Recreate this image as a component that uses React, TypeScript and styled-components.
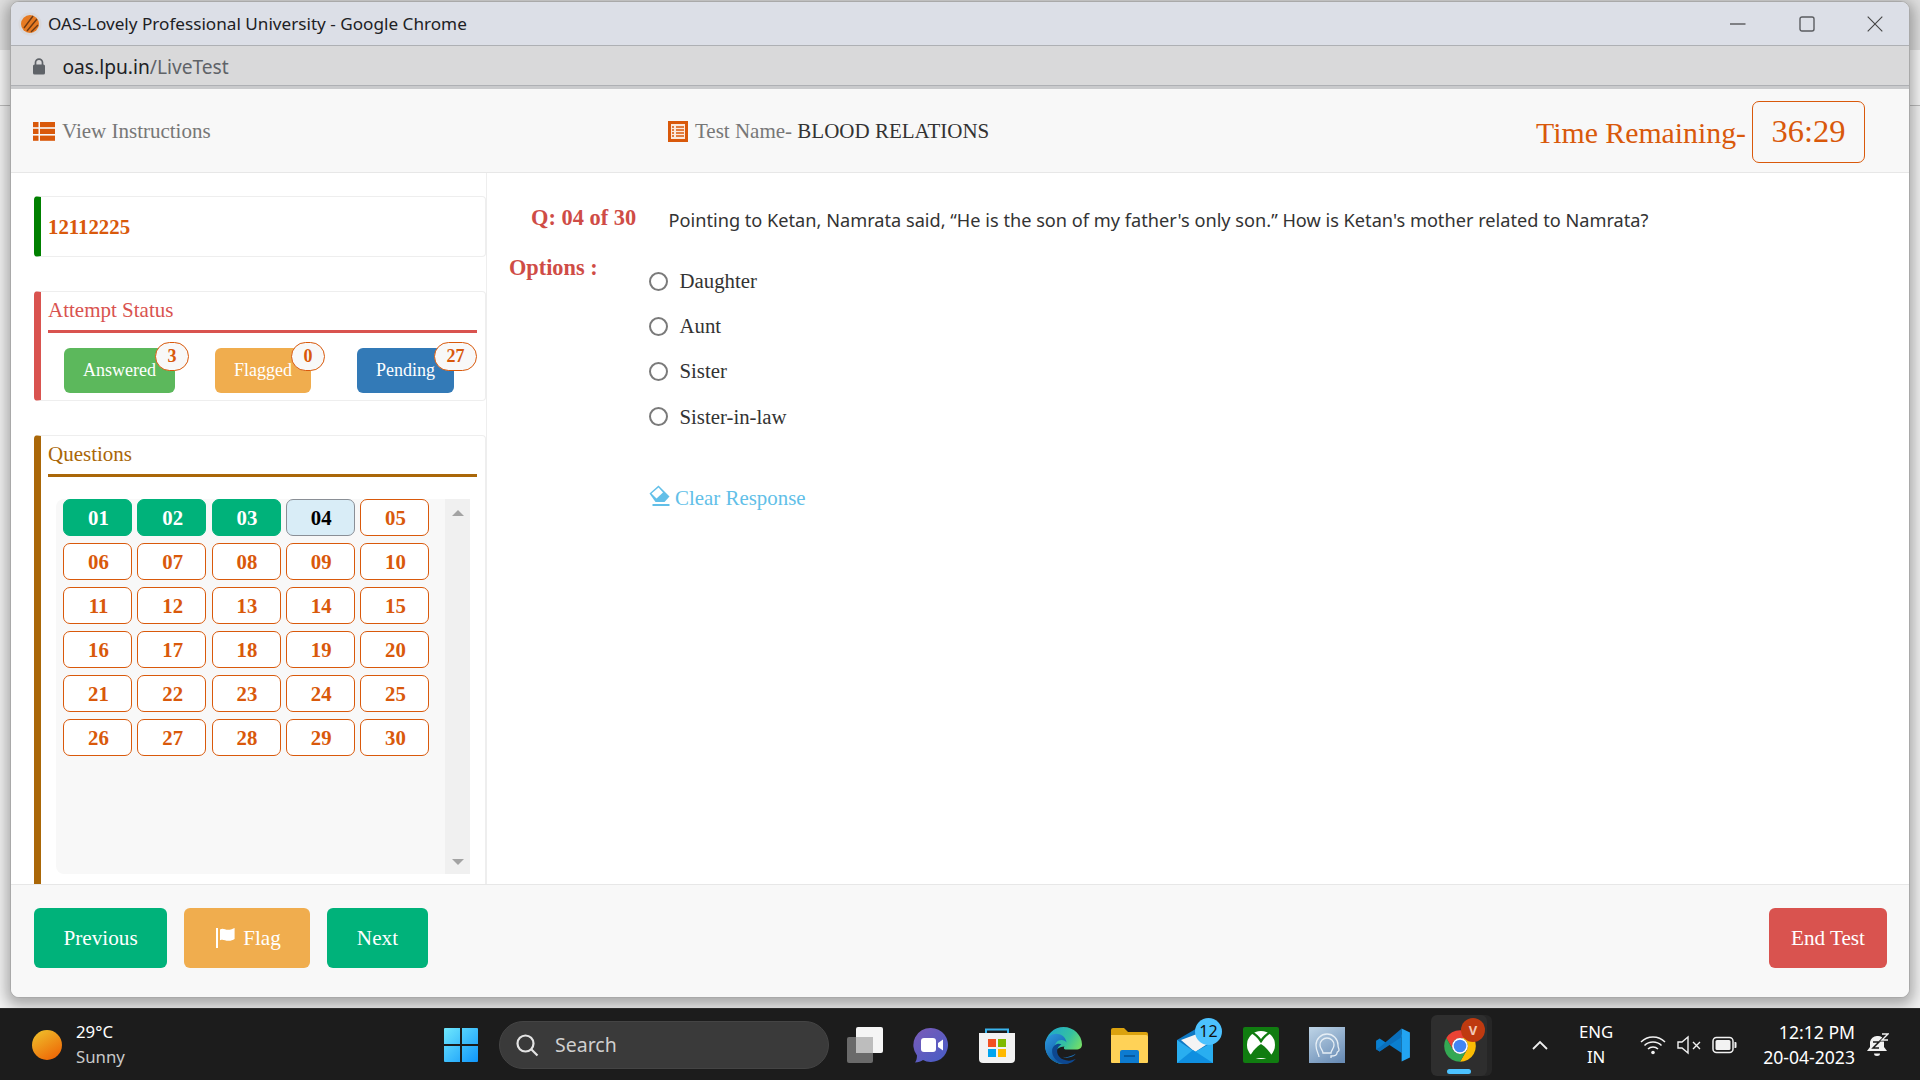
import React from "react";
import styled, { createGlobalStyle } from "styled-components";

const ORANGE = "#d9590b";
const SERIF = `"Liberation Serif", "Times New Roman", serif`;
const SANS = `"Noto Sans", "Open Sans", sans-serif`;

const Global = createGlobalStyle`
  html, body { margin: 0; padding: 0; width: 1920px; height: 1080px; overflow: hidden; }
  * { box-sizing: border-box; }
`;

const Desktop = styled.div`
  width: 1920px;
  height: 1080px;
  display: flex;
  flex-direction: column;
  background: linear-gradient(#dfdfdf 50px, #f7f7f7 50px, #f7f7f7 105px, #bdbdbd 105px, #bdbdbd 106px, #f3f3f3 106px);
`;
const WindowArea = styled.div`
  height: 1008px;
  padding: 1px 10px 10px;
`;
const ChromeWindow = styled.div`
  height: 997px;
  display: flex;
  flex-direction: column;
  border: 1px solid #a9a9a9;
  border-radius: 9px;
  overflow: hidden;
  box-shadow: 0 4px 14px 4px rgba(0, 0, 0, 0.3);
  background: #f8f8f8;
`;
const TitleBar = styled.div`
  height: 44px;
  flex: none;
  display: flex;
  align-items: center;
  padding-left: 7px;
  background: #dcdfe7;
  border-bottom: 1px solid #aeb0b4;
  font: 400 17.15px ${SANS};
  color: #202124;
`;
const TitleText = styled.span`
  margin-left: 6px;
  flex: 1;
`;
const WindowControls = styled.div`
  display: flex;
  align-items: center;
  gap: 52.5px;
  padding-right: 26px;
`;
const AddressBar = styled.div`
  height: 40px;
  flex: none;
  display: flex;
  align-items: center;
  padding: 1px 0 0 21px;
  background: #d9d9da;
  border-bottom: 1px solid #aeb0b4;
  font: 400 19.2px ${SANS};
`;
const Host = styled.span`
  margin-left: 16.5px;
  color: #202124;
`;
const Path = styled.span`
  color: #5f6368;
`;
const Strip = styled.div`
  height: 3px;
  flex: none;
  background: #c9cacc;
`;
const Header = styled.header`
  height: 84px;
  flex: none;
  display: flex;
  align-items: center;
  padding: 2px 44px 0 22px;
  background: #f8f8f8;
  border-bottom: 1px solid #e7e7e7;
  font: 400 21px ${SERIF};
  color: #777;
`;
const HeaderLink = styled.div`
  width: 635px;
  display: flex;
  align-items: center;
  gap: 7px;
`;
const TestName = styled.div`
  flex: 1;
  display: flex;
  align-items: center;
  gap: 7px;
`;
const TestValue = styled.span`
  color: #333;
`;
const Timer = styled.div`
  display: flex;
  align-items: center;
  gap: 6px;
  color: ${ORANGE};
  font-size: 29.8px;
`;
const TimerLabel = styled.span`
  padding-top: 3px;
`;
const TimerBox = styled.div`
  width: 113px;
  height: 62px;
  display: flex;
  align-items: center;
  justify-content: center;
  border: 1px solid ${ORANGE};
  border-radius: 7px;
  font-size: 32.5px;
`;
const Main = styled.main`
  flex: 1;
  min-height: 0;
  display: flex;
  background: #fff;
`;
const Sidebar = styled.aside`
  width: 475px;
  flex: none;
  display: flex;
  flex-direction: column;
  padding: 23px 0 0 23px;
`;
const Card = styled.section<{ $accent: string; $height?: number; $grow?: boolean }>`
  display: flex;
  flex-direction: column;
  flex: ${(p) => (p.$grow ? "1" : "none")};
  min-height: 0;
  height: ${(p) => (p.$height ? `${p.$height}px` : "auto")};
  border: 1px solid #eeeeee;
  border-left: 7px solid ${(p) => p.$accent};
  border-bottom-width: ${(p) => (p.$grow ? 0 : "1px")};
  border-radius: ${(p) => (p.$grow ? "4px 4px 0 0" : "4px")};
  margin-bottom: ${(p) => (p.$grow ? 0 : "34px")};
`;
const StudentId = styled.div`
  margin: auto 0 auto 7px;
  padding-top: 1px;
  font: 700 20.8px ${SERIF};
  color: ${ORANGE};
`;
const CardTitle = styled.div<{ $color: string }>`
  height: 41px;
  margin: 0 8px 0 7px;
  padding-top: 4px;
  border-bottom: 3px solid ${(p) => p.$color};
  color: ${(p) => p.$color};
  font: 400 21px/28px ${SERIF};
  flex: none;
`;
const StatusRow = styled.div`
  display: flex;
  gap: 40px;
  margin-top: 15px;
  padding-left: 23px;
`;
const StatusButton = styled.div<{ $bg: string; $shift?: number }>`
  position: relative;
  height: 45px;
  padding: 0 19px;
  display: flex;
  align-items: center;
  margin-left: ${(p) => p.$shift ?? 0}px;
  background: ${(p) => p.$bg};
  border-radius: 6px;
  color: #fff;
  font: 400 18px ${SERIF};
`;
const Badge = styled.span`
  position: absolute;
  left: calc(100% - 20px);
  top: -6px;
  height: 29px;
  min-width: 32px;
  padding: 0 11.5px;
  display: flex;
  align-items: center;
  justify-content: center;
  background: #f8f8f8;
  border: 1px solid ${ORANGE};
  border-radius: 15px;
  color: ${ORANGE};
  font: 700 18px ${SERIF};
`;
const ListBox = styled.div`
  flex: 1;
  min-height: 0;
  margin: 22px 15px 10px 15px;
  display: flex;
  background: #f8f8f8;
  border-radius: 8px 0 0 8px;
`;
const NumberGrid = styled.div`
  flex: 1;
  padding-left: 7px;
  display: grid;
  grid-template-columns: repeat(5, 69px);
  grid-auto-rows: 37px;
  column-gap: 5.25px;
  row-gap: 7px;
`;
const NumberButton = styled.div<{ $state: "done" | "current" | "open" }>`
  display: flex;
  align-items: center;
  justify-content: center;
  padding-left: 2px;
  border-radius: 7px;
  font: 700 20.8px ${SERIF};
  border: 1px solid
    ${(p) => (p.$state === "done" ? "#00b27a" : p.$state === "current" ? "#8a8f96" : ORANGE)};
  background: ${(p) => (p.$state === "done" ? "#00b27a" : p.$state === "current" ? "#d9edf7" : "#fff")};
  color: ${(p) => (p.$state === "done" ? "#fff" : p.$state === "current" ? "#000" : ORANGE)};
`;
const ScrollTrack = styled.div`
  width: 25px;
  flex: none;
  display: flex;
  flex-direction: column;
  justify-content: space-between;
  align-items: center;
  padding: 11px 0 9px;
  background: #f0f0f0;
`;
const ArrowUp = styled.span`
  width: 0;
  height: 0;
  border-left: 6px solid transparent;
  border-right: 6px solid transparent;
  border-bottom: 6px solid #a3a3a3;
`;
const ArrowDown = styled(ArrowUp)`
  border-bottom: 0;
  border-top: 6px solid #a3a3a3;
`;
const Content = styled.div`
  flex: 1;
  border-left: 1px solid #eeeeee;
  padding-top: 33px;
`;
const QuestionRow = styled.div`
  display: flex;
  padding-left: 44px;
`;
const QuestionNo = styled.div`
  width: 137.5px;
  flex: none;
  color: #cf4c46;
  font: 700 22.4px/24px ${SERIF};
`;
const QuestionText = styled.div`
  color: #333;
  font: 400 18.18px/28px ${SANS};
`;
const OptionsRow = styled.div`
  display: flex;
  padding-left: 22px;
`;
const OptionsLabel = styled.div`
  width: 140px;
  flex: none;
  margin-top: 21px;
  color: #cf4c46;
  font: 700 22.3px/26px ${SERIF};
`;
const OptionsList = styled.div`
  display: flex;
  flex-direction: column;
  padding-top: 24.5px;
`;
const OptionItem = styled.label`
  height: 45.2px;
  display: flex;
  align-items: center;
  gap: 11.5px;
  color: #333;
  font: 400 20.8px ${SERIF};
`;
const Radio = styled.input`
  appearance: none;
  width: 19px;
  height: 19px;
  margin: 0;
  border: 2px solid #7a7a7a;
  border-radius: 50%;
  background: #fff;
`;
const ClearLink = styled.div`
  margin-top: 47px;
  display: flex;
  align-items: center;
  gap: 5px;
  color: #62bfe8;
  font: 400 20.9px ${SERIF};
`;
const Footer = styled.footer`
  height: 113px;
  flex: none;
  display: flex;
  gap: 17px;
  padding: 23px 22px 0 23px;
  background: #f8f8f8;
  border-top: 1px solid #e7e7e7;
`;
const FooterButton = styled.div<{ $bg: string; $push?: boolean; $iconed?: boolean }>`
  height: 60px;
  padding: 0 ${(p) => (p.$push ? 22 : 29.5)}px;
  padding-left: ${(p) => (p.$iconed ? "32px" : "")};
  display: flex;
  align-items: center;
  gap: 8px;
  margin-left: ${(p) => (p.$push ? "auto" : 0)};
  background: ${(p) => p.$bg};
  border-radius: 6px;
  color: #fff;
  font: 400 21.2px ${SERIF};
`;
const Taskbar = styled.div`
  height: 72px;
  flex: none;
  display: flex;
  align-items: center;
  background: #1c1c1c;
  border-top: 1px solid #2a2a2a;
  color: #fff;
  font-family: ${SANS};
`;
const Weather = styled.div`
  width: 443px;
  flex: none;
  display: flex;
  align-items: center;
  gap: 14px;
  padding-left: 32px;
`;
const WeatherText = styled.div`
  display: flex;
  flex-direction: column;
  font-size: 16.8px;
  line-height: 24.5px;
`;
const Muted = styled.span`
  color: #c9c9c9;
`;
const SearchPill = styled.div`
  width: 330px;
  height: 48px;
  margin-left: 20px;
  display: flex;
  align-items: center;
  gap: 16px;
  padding-left: 15px;
  border-radius: 24px;
  background: #3a3a3a;
  border: 1px solid #444;
  font-size: 19.5px;
  color: #cfcfcf;
`;
const AppTray = styled.div`
  display: flex;
  align-items: center;
  gap: 30px;
  margin-left: 18px;
`;
const AppIcon = styled.div<{ $active?: boolean }>`
  position: relative;
  width: 36px;
  height: 36px;
  flex: none;
  &::before {
    content: ${(p) => (p.$active ? '""' : "none")};
    position: absolute;
    left: -10px;
    right: -10px;
    top: -12px;
    bottom: -13px;
    background: #2e2e2e;
    border-radius: 6px;
    box-shadow: 5px 0 0 #262626;
  }
  &::after {
    content: ${(p) => (p.$active ? '""' : "none")};
    position: absolute;
    left: 6px;
    width: 24px;
    bottom: -11px;
    height: 5px;
    background: #4cc2ff;
    border-radius: 3px;
  }
  svg {
    position: relative;
    z-index: 1;
    display: block;
  }
`;
const CountBadge = styled.span`
  position: absolute;
  z-index: 2;
  right: -9px;
  top: -9px;
  width: 27px;
  height: 27px;
  display: flex;
  align-items: center;
  justify-content: center;
  border-radius: 50%;
  background: #4cc2ff;
  color: #111;
  font-size: 16px;
`;
const AvatarBadge = styled.span`
  position: absolute;
  z-index: 2;
  right: -8px;
  top: -9px;
  width: 24px;
  height: 24px;
  display: flex;
  align-items: center;
  justify-content: center;
  border-radius: 50%;
  background: #bf3a10;
  color: #f2c9b8;
  font-size: 13px;
  font-weight: 700;
`;
const SystemTray = styled.div`
  margin-left: auto;
  display: flex;
  align-items: center;
  padding-right: 31px;
`;
const Lang = styled.div`
  margin-left: 26px;
  width: 42px;
  text-align: center;
  font-size: 16.8px;
  line-height: 24.5px;
`;
const TrayIcons = styled.div`
  margin-left: 23px;
  display: flex;
  align-items: center;
  gap: 11px;
`;
const Clock = styled.div`
  margin-left: 26px;
  text-align: right;
  font-size: 17.6px;
  line-height: 24.5px;
`;
const Bell = styled.div`
  margin-left: 12px;
  display: flex;
`;

const Favicon = () => (
  <svg width="24" height="24" viewBox="0 0 24 24">
    <circle cx="12" cy="12" r="11.5" fill="#d8d8dc" />
    <circle cx="12" cy="12" r="9" fill="#e67a22" />
    <path d="M6 16 15 4M9 19 19 7M13 20l7-7" stroke="#6e3a14" strokeWidth="1.4" fill="none" />
  </svg>
);
const Lock = () => (
  <svg width="14" height="17" viewBox="0 0 14 17">
    <path d="M3.5 7V4.6a3.5 3.5 0 0 1 7 0V7" fill="none" stroke="#5f6368" strokeWidth="1.7" />
    <rect x="1" y="6.5" width="12" height="10" rx="1.6" fill="#5f6368" />
  </svg>
);
const Minimize = () => (
  <svg width="16" height="16" viewBox="0 0 16 16"><path d="M0 8h15.5" stroke="#222" strokeWidth="1.1" /></svg>
);
const Maximize = () => (
  <svg width="16" height="16" viewBox="0 0 16 16"><rect x="1" y="1" width="14" height="14" rx="2" fill="none" stroke="#5a5c60" strokeWidth="1.4" /></svg>
);
const Close = () => (
  <svg width="16" height="16" viewBox="0 0 16 16"><path d="M.7.7l14.6 14.6M15.3.7.7 15.3" stroke="#444" strokeWidth="1.1" /></svg>
);
const ThList = () => (
  <svg width="22" height="19" viewBox="0 0 22 19" fill="#d9590b">
    <rect width="5.5" height="5.2" /><rect x="7" width="15" height="5.2" />
    <rect y="6.8" width="5.5" height="5.2" /><rect x="7" y="6.8" width="15" height="5.2" />
    <rect y="13.6" width="5.5" height="5.2" /><rect x="7" y="13.6" width="15" height="5.2" />
  </svg>
);
const ListAlt = () => (
  <svg width="20" height="21" viewBox="0 0 20 21">
    <rect width="20" height="21" fill="#d9590b" />
    <rect x="3" y="3" width="14" height="15" fill="#fbe9dc" />
    <path d="M4 6h2M8 6h8M4 9h2M8 9h8M4 12h2M8 12h8M4 15h2M8 15h8" stroke="#d9590b" strokeWidth="1.3" />
  </svg>
);
const EraserSvg = styled.svg`
  margin-top: -6px;
`;
const Eraser = () => (
  <EraserSvg width="21" height="21" viewBox="0 0 21 21" fill="#62bfe8">
    <path d="M9.500 0.500 20.500 11.500 15.500 17H6.500L0.500 8.500Z" />
    <path d="M9.500 2.500 2.500 8.500 7.500 13.500 14 7.500Z" fill="#fff" />
    <rect x="3.500" y="19" width="17" height="2" />
  </EraserSvg>
);
const FlagIcon = () => (
  <svg width="19" height="20" viewBox="0 0 19 20" fill="#fff">
    <rect width="2" height="20" />
    <path d="M4 1.500c3-2 5 .4 8 .3 2.600 0 5-1 6.600-1.800V11c-2 1.300-4 2-6.600 1.800-3-.2-5-2-8-.6Z" />
  </svg>
);
const Sun = () => (
  <svg width="30" height="30" viewBox="0 0 30 30">
    <defs>
      <linearGradient id="sun" x1="0.2" y1="0" x2="0.8" y2="1">
        <stop offset="0" stopColor="#efbd2a" />
        <stop offset="1" stopColor="#ee6405" />
      </linearGradient>
    </defs>
    <circle cx="15" cy="15" r="15" fill="url(#sun)" />
  </svg>
);
const WindowsLogo = () => (
  <svg width="36" height="36" viewBox="0 0 36 36">
    <defs>
      <linearGradient id="win" x1="0" y1="0" x2="1" y2="1">
        <stop offset="0" stopColor="#6fe8fd" />
        <stop offset="1" stopColor="#0f96fb" />
      </linearGradient>
    </defs>
    <path d="M1 2a1 1 0 0 1 1-1h15v16H1ZM19 1h15a1 1 0 0 1 1 1v15H19ZM1 19h16v16H2a1 1 0 0 1-1-1ZM19 19h16v15a1 1 0 0 1-1 1H19Z" fill="url(#win)" />
  </svg>
);
const SearchIcon = () => (
  <svg width="24" height="24" viewBox="0 0 24 24" fill="none" stroke="#e4e4e4" strokeWidth="2.200">
    <circle cx="10.500" cy="10.500" r="8" /><path d="M16.500 16.500l6 6" />
  </svg>
);
const TaskView = () => (
  <svg width="36" height="36" viewBox="0 0 36 36">
    <rect x="0" y="10" width="26" height="26" rx="2" fill="#6a6a6a" />
    <rect x="9" y="0" width="27" height="26" rx="2" fill="#f5f5f5" />
    <rect x="9" y="10" width="17" height="16" fill="#bdbdbd" />
  </svg>
);
const Meet = () => (
  <svg width="36" height="36" viewBox="0 0 36 36">
    <defs>
      <linearGradient id="meet" x1="0" y1="0" x2="0.8" y2="1">
        <stop offset="0" stopColor="#7b5bb8" />
        <stop offset="1" stopColor="#4a5cc5" />
      </linearGradient>
    </defs>
    <path d="M18 1a17 17 0 1 1-8 32c-2 1.500-5 2.500-8 2.500 1.500-2 2-4.500 2-7A17 17 0 0 1 18 1Z" fill="url(#meet)" />
    <rect x="8" y="11" width="15" height="14" rx="3" fill="#fff" />
    <path d="M25 16l5-3.500v11L25 20Z" fill="#fff" />
  </svg>
);
const Store = () => (
  <svg width="36" height="36" viewBox="0 0 36 36">
    <path d="M7 7V2.500h22V7" fill="none" stroke="#39b4ee" strokeWidth="2" />
    <path d="M0 6h36v26a4 4 0 0 1-4 4H4a4 4 0 0 1-4-4Z" fill="#f2f2f2" />
    <rect x="9" y="12" width="8" height="8" fill="#f25022" />
    <rect x="19" y="12" width="8" height="8" fill="#7fba00" />
    <rect x="9" y="22" width="8" height="8" fill="#00a4ef" />
    <rect x="19" y="22" width="8" height="8" fill="#ffb900" />
  </svg>
);
const Edge = () => (
  <svg width="37" height="37" viewBox="0 0 36 36">
    <defs>
      <linearGradient id="edgeA" x1="0" y1="0" x2="1" y2="0.6">
        <stop offset="0" stopColor="#1aa3d6" />
        <stop offset="0.6" stopColor="#35c1a0" />
        <stop offset="1" stopColor="#7fe35e" />
      </linearGradient>
      <linearGradient id="edgeB" x1="0" y1="0" x2="0.7" y2="1">
        <stop offset="0" stopColor="#2f9be0" />
        <stop offset="1" stopColor="#0b4f9c" />
      </linearGradient>
    </defs>
    <path d="M0 17C1 7 9 0 18 0c10 0 18 8 18 17 0 3-2 5-6 5h-9c-3 0-3-2-2-3-5 0-9 3-9 7 0 5 5 9 11 9-1 .6-2 1-3 1C8 36 0 28 0 17Z" fill="url(#edgeA)" />
    <path d="M0 18C0 9 8 5 14 7c4 1 6 4 7 8-3-3-7-3-10 0-4 5-1 14 6 18 3 1.500 6 2 9 1-3 1.500-5 2-8 2C8 36 0 28 0 18Z" fill="url(#edgeB)" />
    <path d="M16 17c-4 2-6 7-2 12 3 4 11 5 16 2-2 3-6 5-11 5-7-1-13-7-12-14 1-4 5-7 9-5Z" fill="#0d478f" />
    <path d="M30 26c-2 3-8 5-13 3 4 1 8-.5 13-3Z" fill="#1a78c8" />
  </svg>
);
const Folder = () => (
  <svg width="37" height="36" viewBox="0 0 37 36">
    <path d="M0 3a2 2 0 0 1 2-2h11l4 4h18a2 2 0 0 1 2 2v5H0Z" fill="#dba20e" />
    <path d="M0 8h35a2 2 0 0 1 2 2v25a1 1 0 0 1-1 1H1a1 1 0 0 1-1-1Z" fill="#ffd257" />
    <path d="M9 25a2 2 0 0 1 2-2h15a2 2 0 0 1 2 2v11H9Z" fill="#0d7bd0" />
    <path d="M13 29h11" stroke="#054f8f" strokeWidth="1.500" />
  </svg>
);
const Mail = () => (
  <svg width="36" height="36" viewBox="0 0 36 36">
    <path d="M0 13 22 0l14 13v23H0Z" fill="#0f79c4" />
    <path d="M4 13 20 7l12 9-14 9Z" fill="#f4f4f4" />
    <path d="M0 13l18 12 18-10v21H0Z" fill="#29aef0" />
    <path d="M0 36l16-13 20 13Z" fill="#0f8fe0" />
  </svg>
);
const Xbox = () => (
  <svg width="36" height="36" viewBox="0 0 36 36">
    <rect width="36" height="36" rx="2" fill="#107c10" />
    <circle cx="18" cy="18" r="14" fill="#fff" />
    <path d="M8 5c4 2 8 6 10 9 2-3 6-7 10-9" fill="none" stroke="#107c10" strokeWidth="2.500" />
    <path d="M6 31c2-5 7-11 12-14 5 3 10 9 12 14" fill="#107c10" />
  </svg>
);
const HeadApp = () => (
  <svg width="36" height="36" viewBox="0 0 36 36">
    <defs>
      <linearGradient id="head" x1="0.2" y1="0" x2="0.8" y2="1">
        <stop offset="0" stopColor="#b8cfe3" />
        <stop offset="1" stopColor="#6a8db6" />
      </linearGradient>
    </defs>
    <rect width="36" height="36" fill="url(#head)" />
    <path d="M10 30c0-3-3-5-3-12A11 11 0 0 1 29 18c0 3 1 3 1 5s-2 1-2 3-2 3-6 3v2" fill="none" stroke="#e6eef5" strokeWidth="1.300" />
    <path d="M14 26c0-3-3-4-3-8a7 7 0 0 1 14 0c0 4-3 5-3 8Z" fill="none" stroke="#e6eef5" strokeWidth="1.300" />
  </svg>
);
const VSCode = () => (
  <svg width="36" height="36" viewBox="0 0 100 100">
    <path d="M74 96V72L13 32 3 38v24l10 6 61-48Z" fill="#0a7fd0" />
    <path d="M74 4v24L13 68 3 62l10-6Z" fill="#0a6fbc" />
    <path d="M74 4 97 15v70L74 96Z" fill="#22a4f2" />
  </svg>
);
const ChromeLogo = () => (
  <svg width="38" height="38" viewBox="0 0 48 48">
    <path d="M6.680 14A20 20 0 0 1 41.320 14H24A10 10 0 0 0 15.340 29Z" fill="#ea4335" />
    <path d="M41.320 14A20 20 0 0 1 24 44L32.660 29A10 10 0 0 0 24 14Z" fill="#fbbc04" />
    <path d="M24 44A20 20 0 0 1 6.680 14L15.340 29A10 10 0 0 0 32.660 29Z" fill="#34a853" />
    <circle cx="24" cy="24" r="10" fill="#fff" />
    <circle cx="24" cy="24" r="8" fill="#4285f4" />
  </svg>
);
const Chevron = () => (
  <svg width="18" height="12" viewBox="0 0 18 12"><path d="M2 10l7-7 7 7" fill="none" stroke="#eee" strokeWidth="1.800" /></svg>
);
const Wifi = () => (
  <svg width="26" height="20" viewBox="0 0 26 20" fill="none" stroke="#f2f2f2" strokeWidth="1.500">
    <path d="M1 7a17 17 0 0 1 24 0M4.500 10.500a12 12 0 0 1 17 0M8 14a7 7 0 0 1 10 0" />
    <circle cx="13" cy="17.500" r="1.800" fill="#f2f2f2" stroke="none" />
  </svg>
);
const Mute = () => (
  <svg width="24" height="20" viewBox="0 0 24 20" fill="none" stroke="#f2f2f2" strokeWidth="1.400">
    <path d="M1 7v6h4l6 5V2L5 7Z" />
    <path d="M16 7l7 7M23 7l-7 7" />
  </svg>
);
const Battery = () => (
  <svg width="25" height="18" viewBox="0 0 25 18">
    <rect x="1" y="1.500" width="20" height="15" rx="3.500" fill="none" stroke="#f2f2f2" strokeWidth="1.500" />
    <rect x="3.500" y="4" width="15" height="10" rx="1.500" fill="#f2f2f2" />
    <path d="M22.500 6h1a1 1 0 0 1 1 1v4a1 1 0 0 1-1 1h-1Z" fill="#f2f2f2" />
  </svg>
);
const BellZ = () => (
  <svg width="22" height="24" viewBox="0 0 22 24">
    <path d="M10 3a6 6 0 0 1 7 6v5l3 4H0l3-4V9a7 7 0 0 1 7-6Z" fill="#f2f2f2" />
    <path d="M7 20.500h6a3 2.500 0 0 1-6 0Z" fill="#f2f2f2" />
    <path d="M6 9h6l-6 6h6" fill="none" stroke="#1c1c1c" strokeWidth="1.500" />
    <path d="M15 1h6l-6 6h6" fill="none" stroke="#1c1c1c" strokeWidth="3" />
    <path d="M15 1h6l-6 6h6" fill="none" stroke="#f2f2f2" strokeWidth="1.400" />
  </svg>
);

const numbers = Array.from({ length: 30 }, (_, i) => String(i + 1).padStart(2, "0"));
const stateOf = (i: number): "done" | "current" | "open" => (i < 3 ? "done" : i === 3 ? "current" : "open");
const options = ["Daughter", "Aunt", "Sister", "Sister-in-law"];

export default function App() {
  return (
    <Desktop>
      <Global />
      <WindowArea>
        <ChromeWindow>
          <TitleBar>
            <Favicon />
            <TitleText>OAS-Lovely Professional University - Google Chrome</TitleText>
            <WindowControls>
              <Minimize />
              <Maximize />
              <Close />
            </WindowControls>
          </TitleBar>
          <AddressBar>
            <Lock />
            <Host>
              oas.lpu.in<Path>/LiveTest</Path>
            </Host>
          </AddressBar>
          <Strip />
          <Header>
            <HeaderLink>
              <ThList />
              View Instructions
            </HeaderLink>
            <TestName>
              <ListAlt />
              <span>
                Test Name- <TestValue>BLOOD RELATIONS</TestValue>
              </span>
            </TestName>
            <Timer>
              <TimerLabel>Time Remaining-</TimerLabel>
              <TimerBox>36:29</TimerBox>
            </Timer>
          </Header>
          <Main>
            <Sidebar>
              <Card $accent="#008000" $height={61}>
                <StudentId>12112225</StudentId>
              </Card>
              <Card $accent="#d9534f" $height={110}>
                <CardTitle $color="#d9534f">Attempt Status</CardTitle>
                <StatusRow>
                  <StatusButton $bg="#5cb85c">
                    Answered<Badge>3</Badge>
                  </StatusButton>
                  <StatusButton $bg="#f0ad4e">
                    Flagged<Badge>0</Badge>
                  </StatusButton>
                  <StatusButton $bg="#337ab7" $shift={6}>
                    Pending<Badge>27</Badge>
                  </StatusButton>
                </StatusRow>
              </Card>
              <Card $accent="#aa6708" $grow>
                <CardTitle $color="#aa6708">Questions</CardTitle>
                <ListBox>
                  <NumberGrid>
                    {numbers.map((n, i) => (
                      <NumberButton key={n} $state={stateOf(i)}>
                        {n}
                      </NumberButton>
                    ))}
                  </NumberGrid>
                  <ScrollTrack>
                    <ArrowUp />
                    <ArrowDown />
                  </ScrollTrack>
                </ListBox>
              </Card>
            </Sidebar>
            <Content>
              <QuestionRow>
                <QuestionNo>Q: 04 of 30</QuestionNo>
                <QuestionText>
                  Pointing to Ketan, Namrata said, “He is the son of my father's only son.” How is Ketan's mother related to Namrata?
                </QuestionText>
              </QuestionRow>
              <OptionsRow>
                <OptionsLabel>Options :</OptionsLabel>
                <OptionsList>
                  {options.map((o) => (
                    <OptionItem key={o}>
                      <Radio type="radio" name="answer" />
                      {o}
                    </OptionItem>
                  ))}
                  <ClearLink>
                    <Eraser />
                    Clear Response
                  </ClearLink>
                </OptionsList>
              </OptionsRow>
            </Content>
          </Main>
          <Footer>
            <FooterButton $bg="#00b27a">Previous</FooterButton>
            <FooterButton $bg="#f0ad4e" $iconed>
              <FlagIcon />
              Flag
            </FooterButton>
            <FooterButton $bg="#00b27a">Next</FooterButton>
            <FooterButton $bg="#d9534f" $push>
              End Test
            </FooterButton>
          </Footer>
        </ChromeWindow>
      </WindowArea>
      <Taskbar>
        <Weather>
          <Sun />
          <WeatherText>
            <span>29°C</span>
            <Muted>Sunny</Muted>
          </WeatherText>
        </Weather>
        <WindowsLogo />
        <SearchPill>
          <SearchIcon />
          Search
        </SearchPill>
        <AppTray>
          <AppIcon><TaskView /></AppIcon>
          <AppIcon><Meet /></AppIcon>
          <AppIcon><Store /></AppIcon>
          <AppIcon><Edge /></AppIcon>
          <AppIcon><Folder /></AppIcon>
          <AppIcon>
            <Mail />
            <CountBadge>12</CountBadge>
          </AppIcon>
          <AppIcon><Xbox /></AppIcon>
          <AppIcon><HeadApp /></AppIcon>
          <AppIcon><VSCode /></AppIcon>
          <AppIcon $active>
            <ChromeLogo />
            <AvatarBadge>V</AvatarBadge>
          </AppIcon>
        </AppTray>
        <SystemTray>
          <Chevron />
          <Lang>
            ENG
            <br />
            IN
          </Lang>
          <TrayIcons>
            <Wifi />
            <Mute />
            <Battery />
          </TrayIcons>
          <Clock>
            12:12 PM
            <br />
            20-04-2023
          </Clock>
          <Bell>
            <BellZ />
          </Bell>
        </SystemTray>
      </Taskbar>
    </Desktop>
  );
}
